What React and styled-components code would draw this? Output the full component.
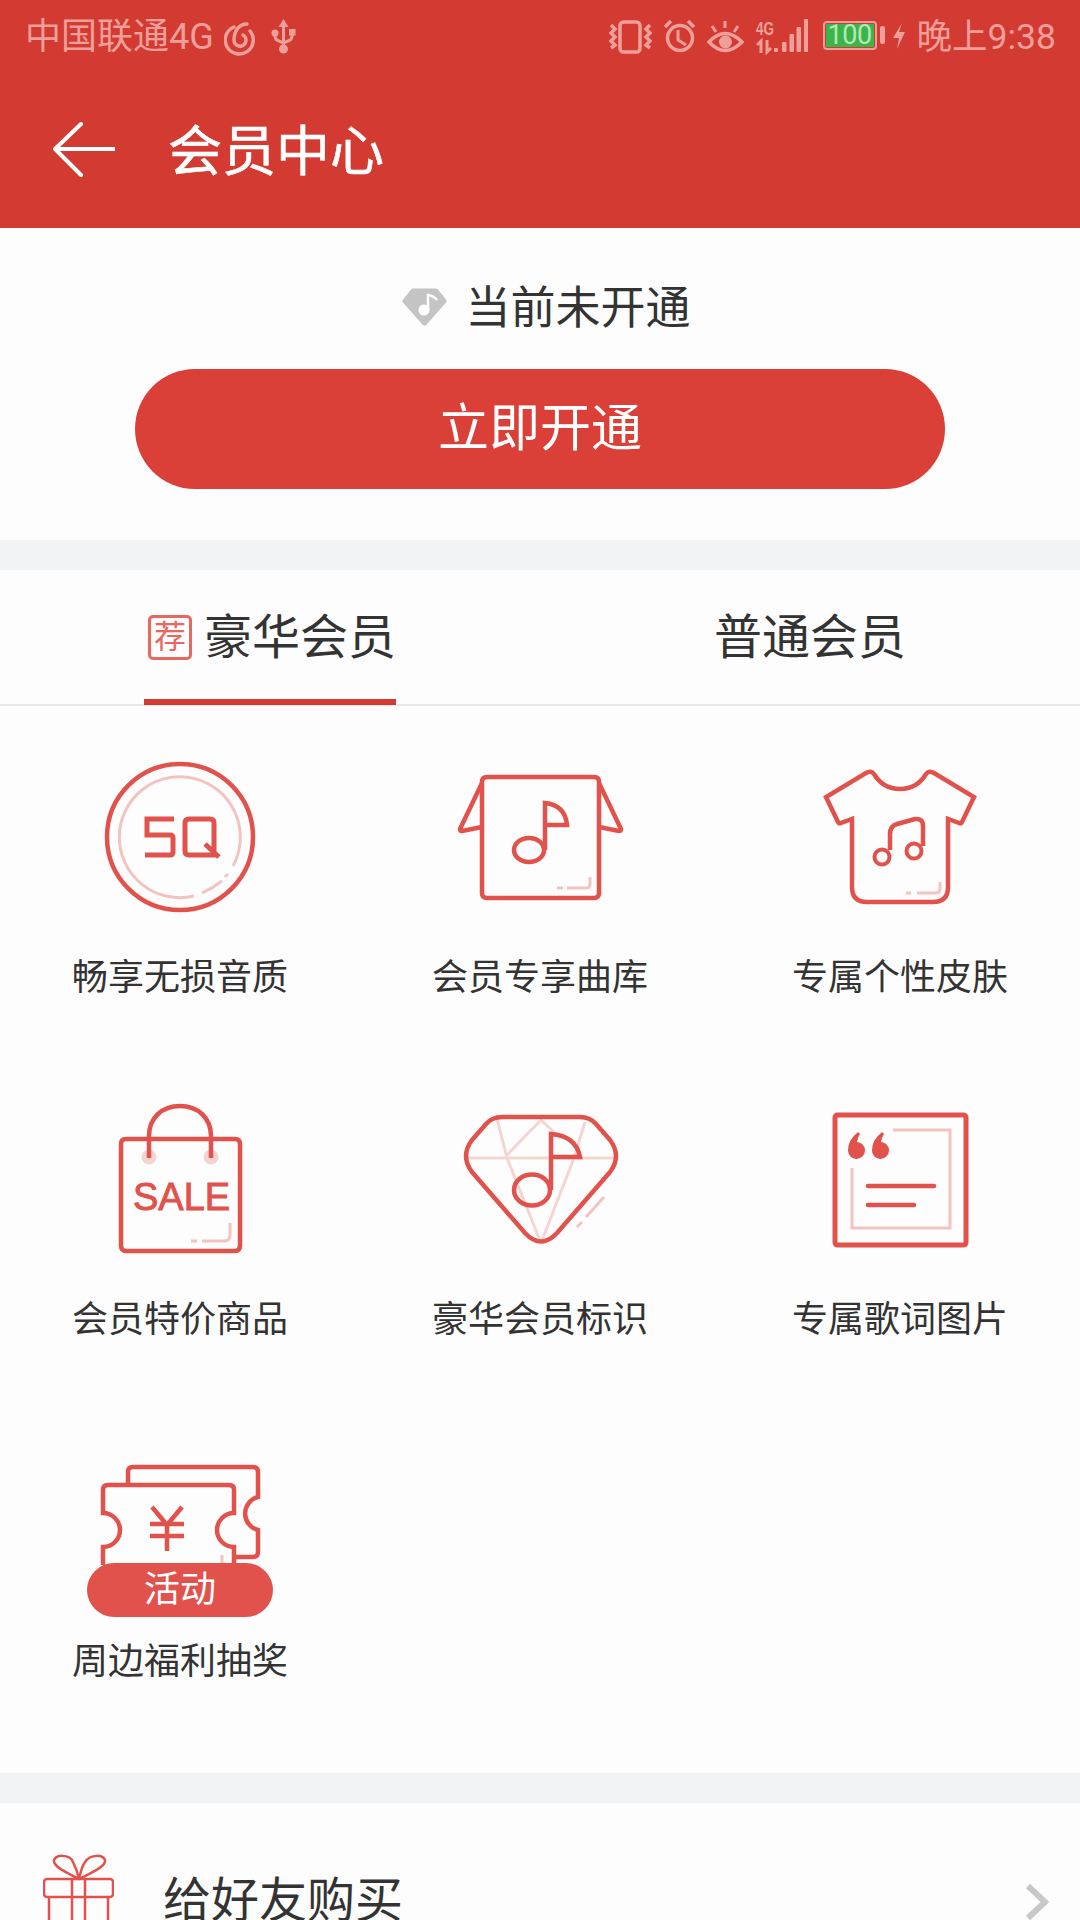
import React from 'react';
import styled, { createGlobalStyle } from 'styled-components';

const RED = '#e2524c';
const PALE = '#f2c4c0';
const STATUS = '#ef9f99';
const FONT = 'Roboto, "Noto Sans CJK SC", sans-serif';

// svg whose viewBox is a window of the page, so paths use the measured coordinates
function Draw({ x, y, w, h, className, children }) {
  return (
    <Svg className={className} width={w} height={h} viewBox={`${x} ${y} ${w} ${h}`} fill="none">
      {children}
    </Svg>
  );
}

function Vibrate() {
  return (
    <Draw x={611} y={14} w={43} h={42}>
      <g stroke={STATUS} strokeWidth="3.5">
        <rect x="622" y="22" width="20" height="30" rx="3.500" />
        <path d="M613 25l4 4-4 4 4 4-4 4 4 4-4 3" />
        <path d="M652 25l-4 4 4 4-4 4 4 4-4 4 4 3" />
      </g>
    </Draw>
  );
}

function Alarm() {
  return (
    <Draw x={666} y={14} w={31} h={42}>
      <g stroke={STATUS} strokeWidth="3.5">
        <circle cx="682" cy="38" r="12.500" />
        <path d="M680 30v10l8 5" strokeWidth="3" />
        <path d="M667 27l6-6M696 27l-6-6" strokeWidth="3.500" />
      </g>
    </Draw>
  );
}

function Eye() {
  return (
    <Draw x={710} y={14} w={37} h={42}>
      <g stroke={STATUS} strokeWidth="3.500">
        <path d="M712 42Q728 25 745 42Q728 59 712 42Z" />
        <path d="M728 21v7M715 26l4 6M741 26l-4 6" strokeWidth="3" />
      </g>
      <circle cx="728.500" cy="42" r="6.500" fill={STATUS} />
    </Draw>
  );
}

function Signal() {
  return (
    <Draw x={758} y={14} w={52} h={42}>
      <text x="758" y="35" fontFamily="Liberation Sans, sans-serif" fontWeight="700" fontSize="19" fill={STATUS} textLength="18" lengthAdjust="spacingAndGlyphs">4G</text>
      <path d="M763 53V41l-4 4M769 40v12l4-4" stroke={STATUS} strokeWidth="3" />
      <g fill={STATUS}>
        <rect x="776" y="48" width="4" height="4" rx="1" />
        <rect x="784" y="42" width="4.500" height="10" rx="1" />
        <rect x="791.500" y="34" width="4.500" height="18" rx="1" />
        <rect x="798.500" y="27" width="4.500" height="25" rx="1" />
        <rect x="806" y="19" width="4.500" height="33" rx="1" />
      </g>
    </Draw>
  );
}

function Bolt() {
  return (
    <Draw x={894} y={14} w={12} h={42}>
      <path d="M903 23L894 38h6L898 49 906 32h-6z" fill={STATUS} />
    </Draw>
  );
}

function Netease() {
  return (
    <Draw x={221} y={14} w={32} h={42}>
      <g stroke={STATUS} strokeWidth="3.500" strokeLinecap="round">
        <path d="M231 27A14 14 0 1 0 247 31" />
        <path d="M244 24C236 24 231 31 231 40A6 6 0 1 0 240 35" />
      </g>
    </Draw>
  );
}

function Usb() {
  return (
    <Draw x={266} y={14} w={29} h={42}>
      <g stroke={STATUS} strokeWidth="3">
        <path d="M280.500 25v24" />
        <path d="M272 35v1q0 4 4 5l4.500 2 4.500-2q4-1 4-5v-1" />
      </g>
      <g fill={STATUS}>
        <path d="M280.500 19l5 8h-10z" />
        <circle cx="280.500" cy="49" r="4.500" />
        <circle cx="272" cy="33" r="3.500" />
        <rect x="286" y="29" width="6.500" height="6.500" />
      </g>
    </Draw>
  );
}

function ShirtBoxIcon() {
  return (
    <>
      <Ink d="M487 777H594Q599 777 599 782V893Q599 898 594 898H487Q482 898 482 893V782Q482 777 487 777Z" />
      <Ink d="M482 783L460 829Q460 831 462 831L482 827M599 783L621 829Q621 831 619 831L599 827" />
      <Ink d="M545 850V803Q565 805 567 825H545" />
      <ellipse cx="529" cy="850" rx="15" ry="12" stroke={RED} strokeWidth="4.500" />
      <Faint d="M557 888h6M567 888h19q4 0 4-4v-7" />
    </>
  );
}

function TeeIcon() {
  return (
    <>
      <Ink d="M866 773L826 797 838 822Q839 824 841 823L852 819V887Q852 902 867 902H933Q948 902 948 887V819L959 823Q961 824 962 822L974 797 934 773Q929 770 926 774C920 784 912 789 900 789C888 789 880 784 874 774Q871 770 866 773Z" />
      <Ink d="M890 850V834Q890 826 897 824L915 819Q923 818 923 826V846" />
      <circle cx="882" cy="857" r="7.500" stroke={RED} strokeWidth="4" />
      <circle cx="914" cy="851" r="7.500" stroke={RED} strokeWidth="4" />
      <Faint d="M906 893h5M917 893h19q4 0 4-4v-7" />
    </>
  );
}

function SqIcon() {
  return (
    <>
      <circle cx="180" cy="837" r="73" stroke={RED} strokeWidth="4.500" />
      <Faint d="M194 896A60.500 60.500 0 1 1 233 866M228 874L225 877M222 881Q213 888 202 893" />
      <Ink d="M174 819H147V835H170Q173 835 173 838V852Q173 855 170 855H145" strokeWidth="5" />
      <Ink d="M189 819H210Q214 819 214 823V855H189Q185 855 185 851V823Q185 819 189 819ZM205 844L219 857" strokeWidth="5" />
    </>
  );
}

function BagIcon() {
  return (
    <>
      <circle cx="149" cy="1157" r="7.500" fill="#f5d5d2" />
      <circle cx="211" cy="1157" r="7.500" fill="#f5d5d2" />
      <Ink d="M126 1139H235Q240 1139 240 1144V1245Q240 1251 235 1251H126Q121 1251 121 1245V1144Q121 1139 126 1139Z" />
      <Ink d="M149 1158V1136C149 1118 162 1106 180 1106C198 1106 211 1118 211 1136V1158" />
      <SaleText x="133" y="1210">SALE</SaleText>
      <Faint d="M191 1241h6M202 1241h22q6 0 6-6v-12" />
    </>
  );
}

function DiamondIcon() {
  return (
    <>
      <Faint stroke="#f5d5d2" d="M468 1158H614M497 1119L507 1158 541 1243M507 1155L541 1120 554 1132M585 1122L574 1158 541 1243" />
      <Ink d="M502 1117H580Q590 1117 596 1124L610 1140Q622 1156 610 1172L557 1233Q541 1250 525 1233L472 1172Q460 1156 472 1140L486 1124Q492 1117 502 1117Z" />
      <Ink d="M551 1190V1134Q576 1136 580 1157H551" />
      <ellipse cx="532" cy="1190" rx="18" ry="15.500" stroke={RED} strokeWidth="4.500" />
      <Faint d="M604 1197L586 1217M582 1222L577 1227" />
    </>
  );
}

function LyricIcon() {
  return (
    <>
      <Ink strokeWidth="5" d="M838 1115H963Q966 1115 966 1118V1242Q966 1245 963 1245H838Q835 1245 835 1242V1118Q835 1115 838 1115Z" />
      <Faint d="M893 1130H950V1228H852V1168" />
      <path d="M858 1132Q848 1140 848 1150A8.500 8.500 0 1 0 857 1142Q858 1137 860 1134ZM882 1132Q872 1140 872 1150A8.500 8.500 0 1 0 881 1142Q882 1137 884 1134Z" fill={RED} />
      <Ink d="M868 1186H934M868 1205H914" strokeLinecap="round" />
    </>
  );
}

function TicketIcon() {
  return (
    <>
      <Ink d="M128 1483V1472Q128 1467 133 1467H253Q258 1467 258 1472V1497A17 17 0 0 0 258 1530V1552Q258 1557 253 1557H235" />
      <Ink d="M103 1565V1547A17 17 0 0 0 103 1513V1490Q103 1485 108 1485H229Q234 1485 234 1490V1513A17 17 0 0 0 234 1547V1565" />
      <Ink d="M152 1507L167 1525 182 1507M150 1524H184M150 1536H184M167 1525V1551" />
      <Faint d="M222 1555v8" />
    </>
  );
}

const perks = [
  { text: '畅享无损音质', Icon: SqIcon },
  { text: '会员专享曲库', Icon: ShirtBoxIcon },
  { text: '专属个性皮肤', Icon: TeeIcon },
  { text: '会员特价商品', Icon: BagIcon },
  { text: '豪华会员标识', Icon: DiamondIcon },
  { text: '专属歌词图片', Icon: LyricIcon },
  { text: '周边福利抽奖', Icon: TicketIcon, badge: '活动' },
];

export default function App() {
  return (
    <Page>
      <GlobalStyle />
      <Header>
        <StatusBar>
          <StatusGroup>
            <Carrier>中国联通4G</Carrier>
            <Netease />
            <Usb />
          </StatusGroup>
          <StatusIcons>
            <Vibrate />
            <Alarm />
            <Eye />
            <Signal />
            <BatteryWrap>
              <Battery><BatteryFill>100</BatteryFill></Battery>
              <BatteryNub />
            </BatteryWrap>
            <Bolt />
            <Clock>晚上9:38</Clock>
          </StatusIcons>
        </StatusBar>
        <TitleBar>
          <Draw x={53} y={119} w={62} h={60}>
            <path d="M114 149H56M81 124L55 149 81 175" stroke="#fff" strokeWidth="4" strokeLinecap="round" strokeLinejoin="round" />
          </Draw>
          <Title>会员中心</Title>
        </TitleBar>
      </Header>

      <Hero>
        <StateRow>
          <svg width="45" height="38" viewBox="0 0 45 38">
            <path d="M11 3H34L42 13 22.500 35 3 13Z" fill="#c4c4c4" stroke="#c4c4c4" strokeWidth="5" strokeLinejoin="round" />
            <circle cx="22" cy="22" r="5.500" fill="#fff" />
            <path d="M26 22V7Q32 8 35 12" stroke="#fff" strokeWidth="2.500" fill="none" />
          </svg>
          <StateText>当前未开通</StateText>
        </StateRow>
        <OpenButton>立即开通</OpenButton>
      </Hero>

      <Band />

      <Tabs>
        <Tab>
          <TabInner $active>
            <Recommend>荐</Recommend>
            豪华会员
          </TabInner>
        </Tab>
        <Tab>
          <TabInner>普通会员</TabInner>
        </Tab>
      </Tabs>

      <PerkGrid>
        {perks.map(({ text, Icon, badge }, i) => (
          <Perk key={text}>
            <IconSlot>
              <Draw x={(i % 3) * 360} y={737 + Math.floor(i / 3) * 342} w={360} h={200}>
                <Icon />
              </Draw>
              {badge && <Badge>{badge}</Badge>}
            </IconSlot>
            <PerkLabel>{text}</PerkLabel>
          </Perk>
        ))}
      </PerkGrid>

      <Band />

      <GiftRow>
        <Draw x={43} y={1848} w={71} h={96}>
          <g stroke={RED} strokeWidth="2.500">
            <rect x="44" y="1877" width="69" height="18" rx="3" />
            <path d="M49 1895V1946M108 1895V1946M72 1877V1946M85 1877V1946" />
            <path d="M79 1877C70 1872 54 1866 54 1859C54 1852 70 1852 73 1860Q77 1868 79 1877C81 1868 82 1864 85 1860C90 1852 105 1852 105 1859C105 1866 88 1872 79 1877Z" />
          </g>
        </Draw>
        <GiftText>给好友购买</GiftText>
        <Chevron x={1024} y={1850} w={26} h={96}>
          <path d="M1028 1886L1045 1902 1028 1918" stroke="#c8c8c8" strokeWidth="6" />
        </Chevron>
      </GiftRow>
    </Page>
  );
}

const GlobalStyle = createGlobalStyle`
  html, body {
    margin: 0;
    padding: 0;
    background: #fdfdfd;
  }
`;

const Svg = styled.svg`
  display: block;
  flex: none;
`;

const Ink = styled.path.attrs({ fill: 'none' })`
  stroke: ${RED};
  stroke-width: ${(p) => p.strokeWidth || 4.5}px;
`;

const Faint = styled.path.attrs({ fill: 'none' })`
  stroke: ${(p) => p.stroke || PALE};
  stroke-width: 3px;
`;

const SaleText = styled.text`
  font-family: "Liberation Sans", sans-serif;
  font-size: 38px;
  fill: ${RED};
  stroke: ${RED};
  stroke-width: 0.9px;
`;

const Page = styled.div`
  width: 1080px;
  height: 1920px;
  overflow: hidden;
  background: #fdfdfd;
  font-family: ${FONT};
  color: #333;
`;

const Header = styled.header`
  height: 228px;
  background: #d33a31;
`;

const StatusBar = styled.div`
  height: 70px;
  padding: 0 24px 0 25px;
  display: flex;
  align-items: center;
  justify-content: space-between;
  color: ${STATUS};
  font-size: 36px;
`;

const StatusGroup = styled.div`
  display: flex;
  align-items: center;
  gap: 13px;
`;

const Carrier = styled.span`
  margin: 4px -3px 0 0;
  line-height: 42px;
`;

const StatusIcons = styled.div`
  display: flex;
  align-items: center;
  gap: 12px;
`;

const Clock = styled.span`
  margin-top: 4px;
  font-size: 35.5px;
  line-height: 42px;
`;

const BatteryWrap = styled.div`
  margin: 0 -4px 0 3px;
  display: flex;
  align-items: center;
  gap: 3px;
`;

const Battery = styled.div`
  width: 54px;
  height: 29px;
  box-sizing: border-box;
  border: 2px solid ${STATUS};
  border-radius: 4px;
  padding: 1px;
`;

const BatteryFill = styled.div`
  height: 100%;
  background: #3bb44a;
  color: #b5e8b5;
  font-size: 27px;
  line-height: 23px;
  text-align: center;
  letter-spacing: -0.5px;
`;

const BatteryNub = styled.div`
  width: 5px;
  height: 18px;
  border-radius: 2px;
  background: ${STATUS};
`;

const TitleBar = styled.div`
  height: 158px;
  padding-left: 53px;
  display: flex;
  align-items: center;
  gap: 53px;
`;

const Title = styled.h1`
  margin: 0 0 3px;
  font-size: 54px;
  font-weight: 400;
  color: #fff;
  -webkit-text-stroke: 0.6px #fff;
`;

const Hero = styled.section`
  height: 312px;
  box-sizing: border-box;
  padding-top: 49px;
  display: flex;
  flex-direction: column;
  align-items: center;
  gap: 32px;
`;

const StateRow = styled.div`
  height: 60px;
  padding-left: 13px;
  display: flex;
  align-items: center;
  gap: 18px;
`;

const StateText = styled.span`
  margin-bottom: 6px;
  font-size: 45px;
`;

const OpenButton = styled.button`
  width: 810px;
  height: 120px;
  flex: none;
  padding: 0 0 11px;
  border: none;
  border-radius: 60px;
  background: #da3f38;
  color: #fff;
  font-family: ${FONT};
  font-size: 51px;
`;

const Band = styled.div`
  height: 30px;
  background: #f2f3f5;
`;

const Tabs = styled.nav`
  height: 136px;
  box-sizing: border-box;
  display: grid;
  grid-template-columns: 1fr 1fr;
  border-bottom: 2px solid #e8e8e8;
`;

const Tab = styled.div`
  display: flex;
  justify-content: center;
`;

const TabInner = styled.div`
  width: 252px;
  height: 135px;
  box-sizing: border-box;
  padding: 0 0 4px ${(p) => (p.$active ? 4 : 0)}px;
  display: flex;
  align-items: center;
  justify-content: center;
  gap: 12px;
  font-size: 48px;
  white-space: nowrap;
  border-bottom: 6px solid ${(p) => (p.$active ? '#d33a31' : 'transparent')};
`;

const Recommend = styled.span`
  width: 45px;
  height: 45px;
  margin-top: 9px;
  box-sizing: border-box;
  border: 3px solid #e8675f;
  border-radius: 5px;
  color: #e8675f;
  font-size: 32px;
  line-height: 38px;
  text-align: center;
`;

const PerkGrid = styled.section`
  height: 1067px;
  box-sizing: border-box;
  padding-top: 31px;
  display: grid;
  grid-template-columns: repeat(3, 360px);
  grid-auto-rows: 264px;
  row-gap: 78px;
`;

const Perk = styled.div`
  display: flex;
  flex-direction: column;
  align-items: center;
  gap: 16px;
`;

const IconSlot = styled.div`
  position: relative;
  width: 360px;
  height: 200px;
`;

const Badge = styled.span`
  position: absolute;
  left: 87px;
  bottom: 4px;
  width: 186px;
  height: 54px;
  border-radius: 27px;
  background: ${RED};
  color: #fff;
  font-size: 36px;
  line-height: 54px;
  text-align: center;
`;

const PerkLabel = styled.div`
  font-size: 36px;
  line-height: 50px;
`;

const GiftRow = styled.section`
  height: 190px;
  padding: 0 30px 0 43px;
  display: flex;
  align-items: center;
  gap: 49px;
`;

const GiftText = styled.span`
  margin-bottom: 4px;
  font-size: 48px;
`;

const Chevron = styled(Draw)`
  margin-left: auto;
`;
